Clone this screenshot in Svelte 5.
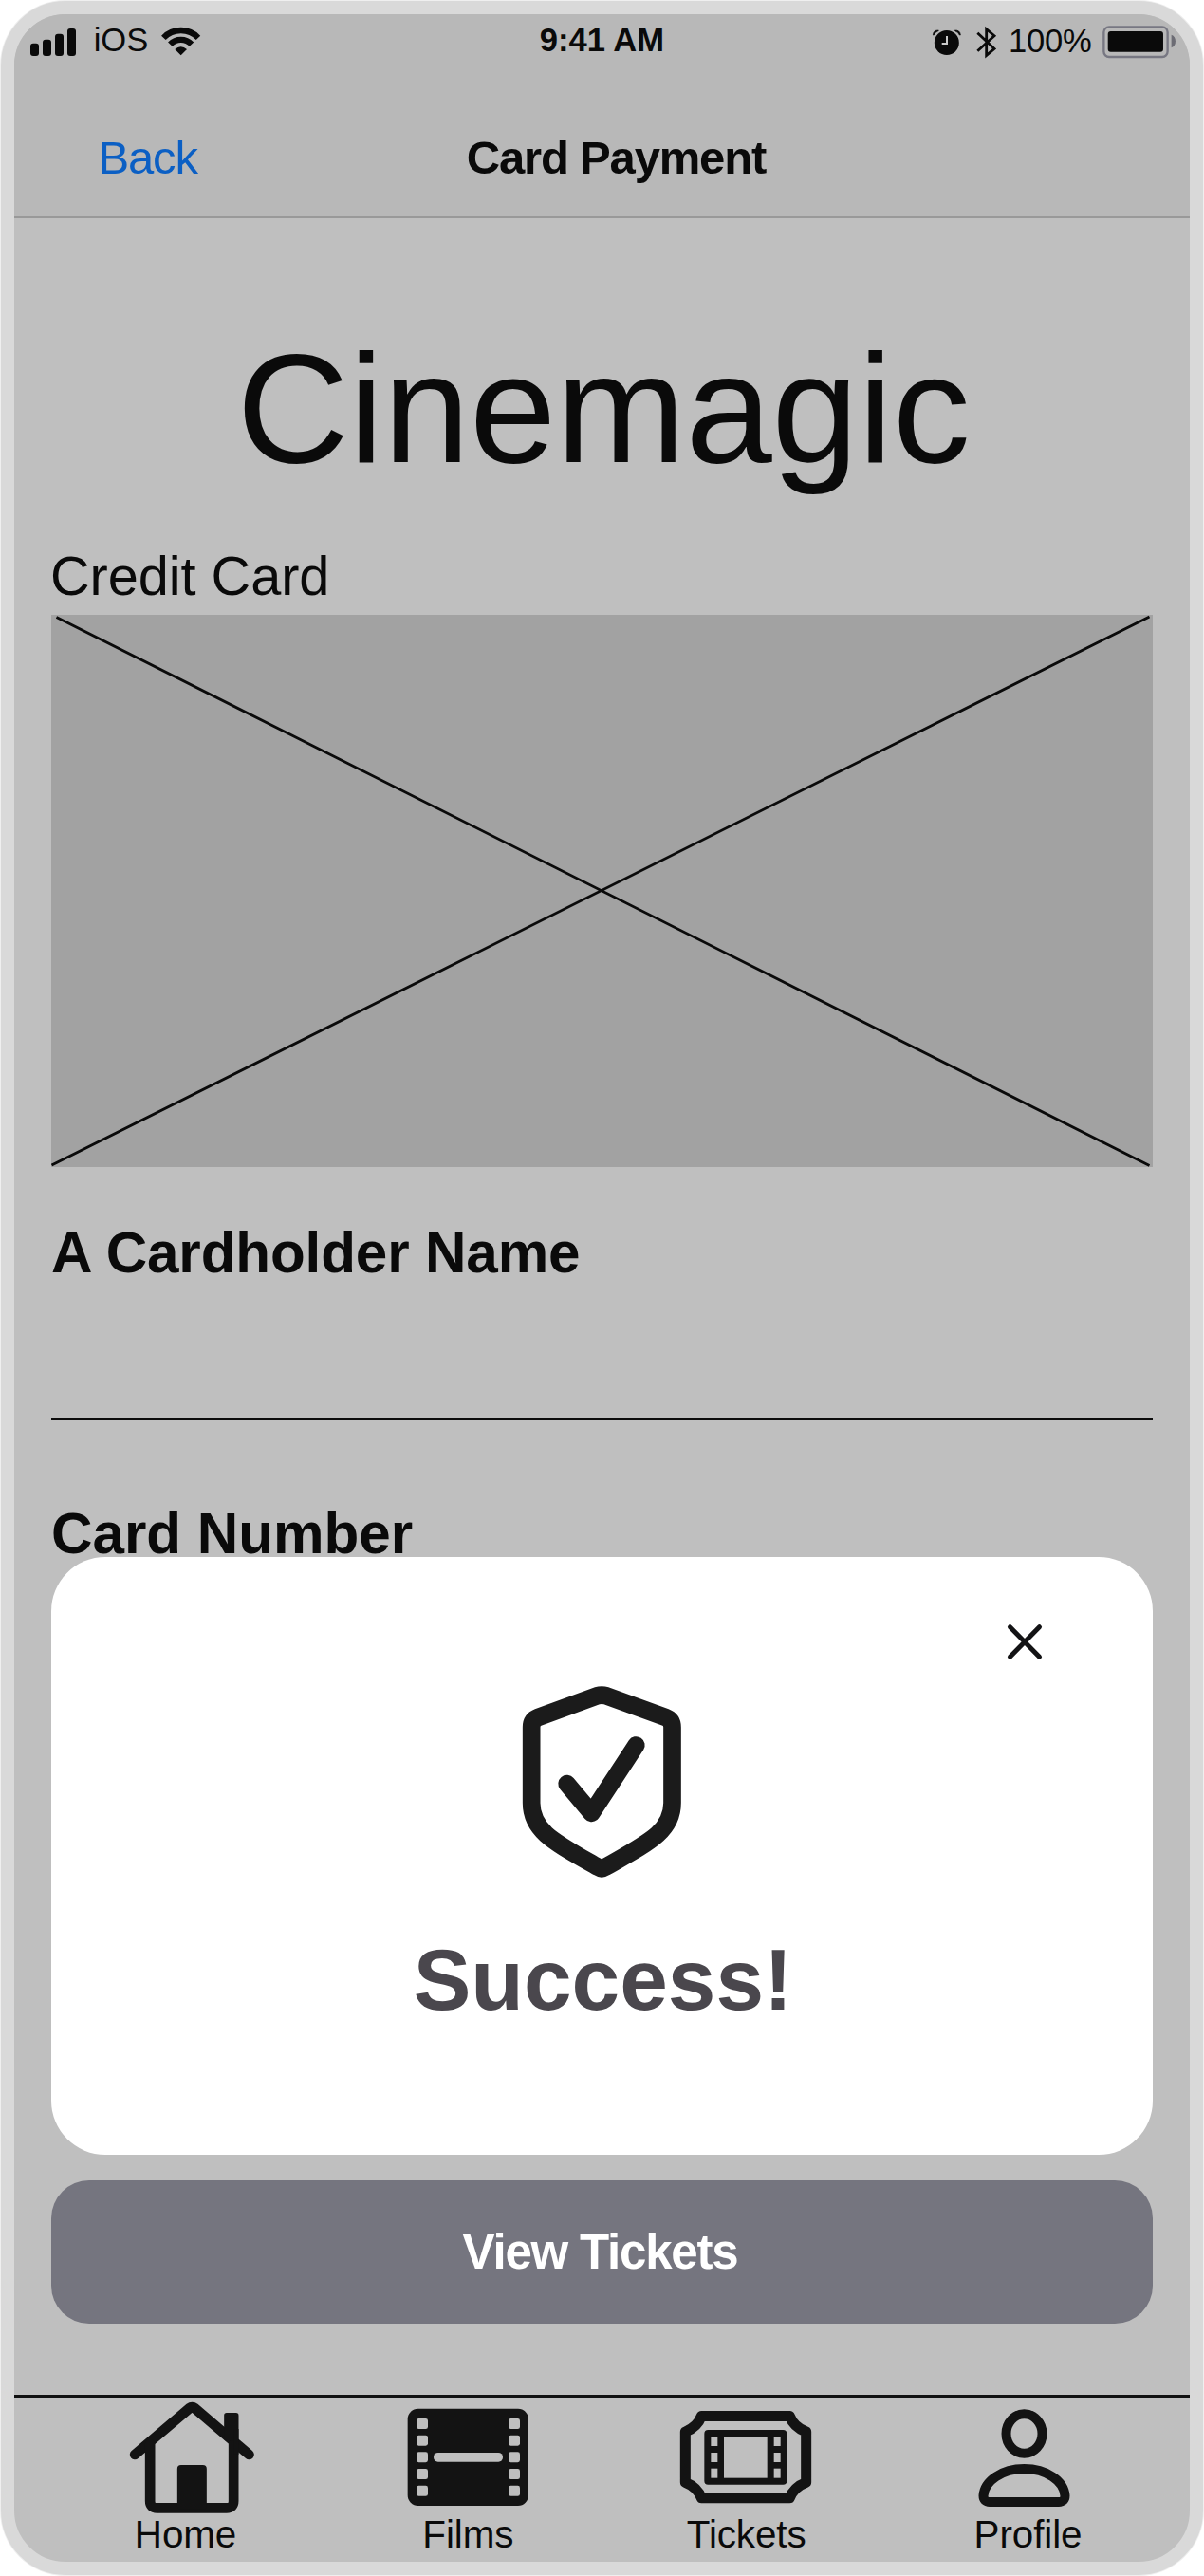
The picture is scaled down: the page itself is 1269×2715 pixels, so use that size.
<script>
  const tabs = [
    { id: 'home', label: 'Home', box: '78.5 90 420 360' },
    { id: 'films', label: 'Films', box: '969 90 420 360' },
    { id: 'tickets', label: 'Tickets', box: '111 90 420 360' },
    { id: 'profile', label: 'Profile', box: '1000.5 90 420 360' }
  ];
  const filmHoles = [147, 200, 252.5, 306, 359.5];
  const ticketHoles = [204, 255, 305];
</script>

<div class="device">
  <header>
    <div class="status">
      <div class="status-left">
        <svg class="signal" viewBox="96 88 144 87">
          <rect x="96" y="135" width="27" height="40" rx="9" />
          <rect x="135" y="123" width="27" height="52" rx="9" />
          <rect x="174" y="105" width="27" height="70" rx="9" />
          <rect x="213" y="88" width="27" height="87" rx="9" />
        </svg>
        <span class="carrier">iOS</span>
        <svg class="wifi" viewBox="510 87 124 88">
          <g fill="none" stroke="#0a0a0a" stroke-width="19">
            <path d="M517 119.5A76 76 0 0 1 627 119.5" />
            <path d="M538 140A47.5 47.5 0 0 1 606 140" />
          </g>
          <path d="M553 156Q572 140 591 156L572 175Z" />
        </svg>
      </div>
      <span class="time">9:41 AM</span>
      <div class="status-right">
        <svg class="alarm" viewBox="400 88 89 87">
          <circle cx="444.5" cy="133" r="39" />
          <path d="M401 109Q402 93 419 94L417 97Q408 99 404 109ZM488 109Q487 93 470 94L472 97Q481 99 485 109Z" stroke="#0a0a0a" stroke-width="2" />
          <path d="M445 112V136H429" fill="none" stroke="#c9c9c9" stroke-width="6" />
        </svg>
        <svg class="bluetooth" viewBox="540 80 60 104">
          <path d="M541 103L594 153L569 174V91L594 112L541 160" fill="none" stroke="#0a0a0a" stroke-width="8.5" />
        </svg>
        <span class="percent">100%</span>
        <svg class="battery" viewBox="936 83 231 103">
          <rect x="940" y="87" width="202" height="95" rx="17" fill="none" stroke="#777782" stroke-width="7" />
          <rect x="953" y="101" width="175" height="65" rx="9" />
          <path d="M1154 112Q1167 117 1167 132.500Q1167 148 1154 153Z" fill="#6c6c74" />
        </svg>
      </div>
    </div>
    <nav>
      <span class="back">Back</span>
      <span class="title">Card Payment</span>
    </nav>
  </header>

  <main>
    <h1>Cinemagic</h1>
    <p class="caption">Credit Card</p>
    <div class="card">
      <svg viewBox="0 0 1161 582">
        <path d="M5.500 2.500L1157.500 580.500M0.500 580L1157.500 2" fill="none" stroke="#0a0a0a" stroke-width="2.800" />
      </svg>
    </div>
    <label class="field">
      <span>A Cardholder Name</span>
    </label>
    <p class="field-next">Card Number</p>

    <section class="dialog">
      <svg class="close" viewBox="0 0 36 37">
        <path d="M2.500 2.700L33.500 34.300M33.500 2.700L2.500 34.300" fill="none" stroke="#131315" stroke-width="5" stroke-linecap="round" />
      </svg>
      <svg class="shield" viewBox="443.500 101 522 624">
        <g fill="none" stroke="#1b1b1b" stroke-linecap="round" stroke-linejoin="round">
          <path
            d="M688 141Q702 137 716 141L904 209Q925 217 925 240V480C925 570 850 605 713 683Q702 690 691 683C555 605 480 570 480 480V240Q480 217 501 209Z"
            stroke-width="56"
          />
          <path d="M592 419L670 512L811 297" stroke-width="55" />
        </g>
      </svg>
      <h2>Success!</h2>
    </section>

    <button type="button">View Tickets</button>
  </main>

  <footer>
    {#each tabs as tab (tab.id)}
      <div class="tab">
        <svg viewBox={tab.box}>
          {#if tab.id === 'home'}
            <g fill="none" stroke="#131313" stroke-width="32" stroke-linecap="round" stroke-linejoin="round">
              <path d="M127 261L299 115Q308 108 317 115L488 261" />
              <path d="M175 228V408Q175 430 197 430H417Q439 430 439 408V228" />
            </g>
            <rect x="409" y="129" width="46" height="88" rx="8" fill="#131313" />
            <path d="M439 180H455V260H439Z" fill="#131313" />
            <rect x="261" y="294" width="93" height="140" rx="12" fill="#131313" />
          {:else if tab.id === 'films'}
            <rect x="989" y="116" width="382" height="307" rx="33" fill="#131313" />
            {#each filmHoles as y}
              <rect x="1017" {y} width="36" height="33" rx="7" fill="#bfbfbf" />
              <rect x="1308" {y} width="36" height="33" rx="7" fill="#bfbfbf" />
            {/each}
            <rect x="1071" y="255" width="219" height="29" rx="14" fill="#bfbfbf" />
          {:else if tab.id === 'tickets'}
            <path
              d="M178 139.500H457Q470 174 509 189V349Q470 364 457 398.500H178Q165 364 127 349V189Q165 174 178 139.500Z"
              fill="none"
              stroke="#131313"
              stroke-width="33"
              stroke-linejoin="round"
            />
            <rect x="187" y="183" width="261" height="173" rx="12" fill="#131313" />
            <rect x="249" y="204" width="137" height="131" fill="#bfbfbf" />
            {#each ticketHoles as y}
              <rect x="208" {y} width="21" height="30" fill="#bfbfbf" />
              <rect x="407" {y} width="21" height="30" fill="#bfbfbf" />
            {/each}
          {:else}
            <g fill="none" stroke="#131313" stroke-width="30">
              <ellipse cx="1200" cy="195" rx="57" ry="62" />
              <path d="M1071 391C1074 344 1130 306 1200 306S1326 344 1329 391Q1329 411 1309 411H1091Q1071 411 1071 391Z" />
            </g>
          {/if}
        </svg>
        <span>{tab.label}</span>
      </div>
    {/each}
  </footer>
</div>

<style>
  :global(body) {
    margin: 0;
    background: #fff;
  }

  .device {
    box-sizing: border-box;
    display: flex;
    flex-direction: column;
    width: 1267px;
    height: 2713px;
    margin: 1px;
    overflow: hidden;
    border: 14px solid #d9d9d9;
    border-radius: 68px;
    background: #bfbfbf;
    box-shadow: 0 0 0 1px #efefef;
    color: #0a0a0a;
    font-family: 'Liberation Sans', Arial, sans-serif;
  }

  svg {
    display: block;
    flex: none;
    overflow: visible;
    fill: #0a0a0a;
  }

  h1,
  h2,
  p {
    margin: 0;
  }

  header {
    height: 213px;
    flex: none;
    border-bottom: 2px solid #999;
    background: #b8b8b8;
  }

  .status {
    display: grid;
    grid-template-columns: 1fr auto 1fr;
    align-items: center;
    height: 58px;
    padding: 0 15px 0 17px;
    font-size: 34.6px;
    line-height: 40px;
  }

  .status-left,
  .status-right {
    display: flex;
    align-items: center;
  }

  .status-right {
    justify-content: flex-end;
  }

  .signal {
    width: 48px;
    height: 29px;
  }

  .carrier {
    margin: 0 13.6px 0 18.7px;
    padding-bottom: 5px;
  }

  .wifi {
    width: 41.300px;
    height: 29.300px;
  }

  .time {
    padding: 0 2px 5px 0;
    font-weight: 700;
  }

  .alarm {
    width: 29.700px;
    height: 29px;
    margin-right: 17px;
  }

  .bluetooth {
    width: 20px;
    height: 34.700px;
  }

  .percent {
    margin: 0 11.500px 0 13px;
    padding-bottom: 2px;
    letter-spacing: -0.250px;
  }

  .battery {
    width: 77px;
    height: 34.300px;
  }

  nav {
    display: flex;
    align-items: center;
    gap: 284px;
    height: 125px;
    padding: 30px 0 0 88.500px;
    font-size: 49px;
    letter-spacing: -1.180px;
  }

  .back {
    color: #0b5fc4;
  }

  .title {
    font-weight: 700;
    white-space: nowrap;
  }

  main {
    display: flex;
    flex-direction: column;
    flex: 1;
    padding: 111px 39px 0;
  }

  h1 {
    padding-left: 3px;
    font-size: 164px;
    font-weight: 400;
    letter-spacing: -0.200px;
    line-height: 180px;
    text-align: center;
  }

  .caption {
    margin: 53px 0 8px -1px;
    font-size: 57.700px;
    letter-spacing: -0.050px;
    line-height: 66px;
  }

  .card {
    height: 582px;
    background: #a2a2a2;
  }

  .card svg {
    width: 1161px;
    height: 582px;
  }

  .field {
    box-sizing: border-box;
    height: 211px;
    margin-top: 56px;
    border-bottom: 2px solid #0c0c0c;
    box-shadow: inset 0 -1px #77777c;
  }

  .field span,
  .field-next {
    display: block;
    font-size: 60.200px;
    font-weight: 700;
    line-height: 68px;
  }

  .field span {
    padding-top: 1px;
    letter-spacing: -0.130px;
  }

  .field-next {
    margin-top: 86px;
  }

  .dialog {
    position: relative;
    display: flex;
    flex-direction: column;
    align-items: center;
    box-sizing: border-box;
    height: 630px;
    margin-top: -10px;
    padding-top: 71px;
    border-radius: 57px;
    background: #fff;
  }

  .close {
    align-self: flex-end;
    width: 36px;
    height: 37px;
    margin-right: 117px;
  }

  .shield {
    width: 174px;
    height: 208px;
    margin-top: 25px;
  }

  h2 {
    margin-top: 54.500px;
    padding-left: 2px;
    color: #4a474d;
    font-size: 91px;
    line-height: 100px;
  }

  button {
    height: 151.300px;
    flex: none;
    margin-top: 27px;
    padding: 1px 4px 0 0;
    border: 0;
    border-radius: 40px;
    background: #75757f;
    color: #fff;
    font: 700 51px/60px 'Liberation Sans', Arial, sans-serif;
    letter-spacing: -1.200px;
  }

  footer {
    display: grid;
    grid-template-columns: 297px 298.600px 288.200px 305.400px;
    flex: none;
    box-sizing: border-box;
    height: 176px;
    padding: 3px 0 0 32px;
    border-top: 3px solid #111;
  }

  .tab {
    display: flex;
    flex-direction: column;
    align-items: center;
    font-size: 40.400px;
    line-height: 42px;
    letter-spacing: -0.100px;
  }

  .tab svg {
    width: 140px;
    height: 120px;
  }
</style>
